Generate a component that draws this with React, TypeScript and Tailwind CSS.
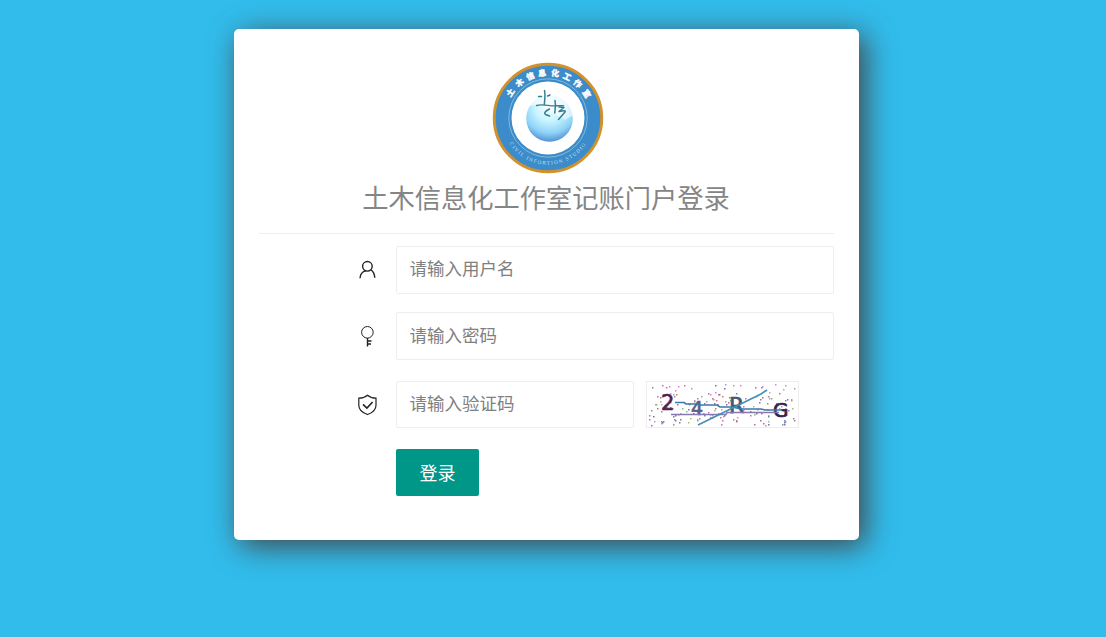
import React from 'react';

const ringText = '土木信息化工作室'.split('');
const ringAngles = [-56, -39, -23, -7.5, 9, 25, 41, 58];
const colors = ['#a03a9a', '#4aa04a', '#3a3a80', '#b04040', '#c050c0', '#306878', '#80a040', '#803080'];

function noise(n: number) {
  const v = Math.sin(n * 12.9898) * 43758.5453;
  return v - Math.floor(v);
}

const dots = Array.from({ length: 165 }, (_, i) => ({
  x: Math.round(noise(i + 1) * 146 + 2),
  y: Math.round(noise(i + 401) * 41 + 2),
  c: colors[Math.floor(noise(i + 801) * 8)],
}));

function Logo() {
  return (
    <svg className="block h-[112px] w-[112px] shrink-0" viewBox="0 0 112 112">
      <defs>
        <radialGradient id="ball" cx="0.5" cy="0.25" r="0.78">
          <stop offset="0" stopColor="#f4fdff" />
          <stop offset="0.4" stopColor="#c8f4fe" />
          <stop offset="0.72" stopColor="#8fd3f8" />
          <stop offset="1" stopColor="#4a86cf" />
        </radialGradient>
        <path id="arc" d="M13 73 A46 46 0 0 0 99 73" />
      </defs>
      <circle cx="56" cy="56" r="53.800" fill="#3c8bcb" stroke="#d2922b" strokeWidth="2.900" />
      <circle cx="56" cy="56" r="39.200" fill="none" stroke="#8fcbd8" strokeWidth="0.800" />
      <circle cx="56" cy="56" r="36.500" fill="#fff" />
      <circle cx="57.500" cy="56.500" r="23.300" fill="url(#ball)" />
      <path d="M35 44C40 35 48 30 58 30h24v23c-3 1-6 3-9 5-2-4-7-2-10-7-6 0-11-4-16-7-5-1-9 0-12 0Z" fill="#fff" opacity="0.6" />
      <g fill="none" stroke="#347f93" strokeLinecap="round" strokeLinejoin="round">
        <path d="M52.500 28.500c1 4 .3 9-.2 14" strokeWidth="1.500" />
        <path d="M46.500 34.500h3M55.500 34l2.500-1M44.500 43.500c7-2 13 1 20 .3h7" strokeWidth="1.400" />
        <path d="M63 38.500c1 5 0 9-.2 12.500M57.500 47c-4 2-6 4-4 5.500l4 1.500M67 45l5 .5-5 4c5-1 7-1 6 .5l-6.500 7.500" strokeWidth="1.500" />
      </g>
      {ringText.map((t, i) => (
        <text key={t} x="56" y="13.500" textAnchor="middle" stroke="#fff" strokeWidth="0.300" transform={`rotate(${ringAngles[i]} 56 56)`} className="fill-white font-['Noto_Sans_CJK_SC',sans-serif] text-[8px] font-black">{t}</text>
      ))}
      <text className="fill-[#c2e0ef] font-['Liberation_Serif',serif] text-[5.2px]" letterSpacing="1.300">
        <textPath href="#arc" startOffset="50%" textAnchor="middle">CIVIL INFORTION STUDIO</textPath>
      </text>
    </svg>
  );
}

function Captcha() {
  return (
    <svg className="block h-full w-full" viewBox="0 0 151 45">
      {dots.map((d, i) => <rect key={i} x={d.x} y={d.y} width="1.500" height="1.500" fill={d.c} opacity="0.700" />)}
      <g className="font-['DejaVu_Sans',sans-serif] text-[21px]" strokeWidth="0.700">
        <text x="14" y="28" fill="#53204f" stroke="#53204f">2</text>
        <text x="44" y="33" fill="#5c5f80" stroke="#5c5f80" className="text-[19px]">4</text>
        <text x="82" y="31" fill="#47566f" stroke="#47566f" className="text-[22px]">R</text>
        <text x="126" y="35" fill="#35204a" stroke="#35204a" className="text-[20px]">G</text>
      </g>
      <g fill="none" strokeWidth="1.600">
        <path d="M28 20.500h9l2 1.500h11l2 1h18l3 2h12l9 2h20l4 1h17" stroke="#3e78a8" />
        <path d="M24 32.500h55l1-2h52" stroke="#8878b0" />
        <path d="M51 43 114 12l6-4" stroke="#458eb5" />
      </g>
    </svg>
  );
}

const inputClass = "block border border-[#eee] rounded-[2px] bg-white pl-[12.5px] font-['Noto_Sans_CJK_SC',sans-serif] text-[17.5px] font-normal text-black placeholder:text-[#808080] outline-none";

function UserIcon() {
  return (
    <svg className="h-5 w-5" viewBox="0 0 20 20" fill="none" stroke="#222" strokeWidth="1.400">
      <circle cx="10.400" cy="6.300" r="4.800" />
      <path d="M3 18.200c.2-3.800 2.100-6.400 5.700-7.300M14 9.700c2.200 1.700 3.600 4.500 3.800 8.100" />
    </svg>
  );
}

function KeyIcon() {
  return (
    <svg className="h-[22px] w-5" viewBox="0 0 20 22" fill="none" stroke="#222">
      <circle cx="10.400" cy="7.300" r="5.800" strokeWidth="1" />
      <path d="M10.500 13v8.500M10.500 16h4M10.500 19h3.500" strokeWidth="1.400" />
    </svg>
  );
}

function ShieldIcon() {
  return (
    <svg className="h-[22px] w-5" viewBox="0 0 20 22" fill="none" stroke="#222" strokeWidth="1.200">
      <path d="M10.500 1.200c2.200 1.900 5 2.900 8.500 3v7c0 4.300-3.900 7.700-8.500 9.300-4.600-1.600-8.700-5-8.700-9.300v-7c3.500-.1 6.500-1.100 8.700-3Z" />
      <path d="m6 10.300 3.900 3.700 5.700-6" strokeWidth="1.600" />
    </svg>
  );
}

export default function App() {
  return (
    <main className="flex h-screen items-start overflow-hidden bg-[#31bcec] pt-[29px] pl-[234px]">
      <section className="flex h-[511px] w-[625px] flex-col rounded-[5px] bg-white px-[25px] pt-[33px] shadow-[6px_6px_30px_#444]">
        <header className="flex h-[172px] flex-col items-center border-b border-[#eee]">
          <div className="pl-[3px]"><Logo /></div>
          <h1 className="mt-[3px] pr-[1px] font-['Noto_Sans_CJK_SC',sans-serif] text-[26.25px] leading-[40px] font-normal text-[#858585] whitespace-nowrap">土木信息化工作室记账门户登录</h1>
        </header>
        <form className="flex flex-col pt-[12px]">
          <div className="flex h-[48px] items-center">
            <span className="flex w-[137px] justify-end pr-[19px]"><UserIcon /></span>
            <input className={`${inputClass} h-[48px] w-[438px] pb-[5px]`} placeholder="请输入用户名" />
          </div>
          <div className="mt-[18px] flex h-[48px] items-center">
            <span className="flex w-[137px] justify-end pr-[19px]"><KeyIcon /></span>
            <input type="password" className={`${inputClass} h-[48px] w-[438px] pb-[4px]`} placeholder="请输入密码" />
          </div>
          <div className="mt-[21px] flex h-[47px] items-center">
            <span className="flex w-[137px] justify-end pr-[19px]"><ShieldIcon /></span>
            <input className={`${inputClass} h-[47px] w-[238px] pb-[4px]`} placeholder="请输入验证码" />
            <div className="ml-[12px] h-[47px] w-[153px] border border-[#eee]"><Captcha /></div>
          </div>
          <button type="button" className="mt-[21px] ml-[137px] h-[47px] w-[83px] rounded-[2px] bg-[#009688] font-['Noto_Sans_CJK_SC',sans-serif] text-[18px] text-white">登录</button>
        </form>
      </section>
    </main>
  );
}
